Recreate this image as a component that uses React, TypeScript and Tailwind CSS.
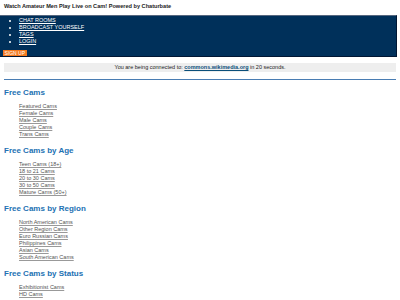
import React from 'react';

const sections = [
  { title: 'Free Cams', links: ['Featured Cams', 'Female Cams', 'Male Cams', 'Couple Cams', 'Trans Cams'] },
  { title: 'Free Cams by Age', links: ['Teen Cams (18+)', '18 to 21 Cams', '20 to 30 Cams', '30 to 50 Cams', 'Mature Cams (50+)'] },
  {
    title: 'Free Cams by Region',
    links: ['North American Cams', 'Other Region Cams', 'Euro Russian Cams', 'Philippines Cams', 'Asian Cams', 'South American Cams'],
  },
  { title: 'Free Cams by Status', links: ['Exhibitionist Cams', 'HD Cams'] },
];

const navItems = ['CHAT ROOMS', 'BROADCAST YOURSELF', 'TAGS', 'LOGIN'];

const App: React.FC = () => {
  return (
    <div className="w-[400px] h-[300px] overflow-hidden bg-white font-['Liberation_Sans',Arial,sans-serif]">
      {/* Title */}
      <h1 className="px-[4px] pt-[3px] text-[5.6px] leading-[7px] font-bold text-[#222]">
        Watch Amateur Men Play Live on Cam! Powered by Chaturbate
      </h1>

      {/* Header bar */}
      <div className="mt-[5px] w-[397px] h-[42px] bg-[#00305a] border-t border-t-[#56677f] border-b border-b-[#001633] border-r border-r-[#001633] flex flex-col">
        <ul className="list-disc pl-[19px] pt-px text-[5.5px] leading-[7px] text-white">
          {navItems.map(item => (
            <li key={item}>
              <a href="#" className="underline">{item}</a>
            </li>
          ))}
        </ul>
        <div className="mt-auto pl-[3px] flex text-[5px] leading-[6px]">
          <span className="bg-[#f47a20] text-white px-[1.5px]">SIGN UP</span>
        </div>
      </div>

      {/* Redirect notice */}
      <div className="mx-[4px] mt-[6px] h-[9px] bg-[#eeeeee] text-center text-[5.5px] leading-[9px] text-[#222]">
        You are being connected to:{' '}
        <a href="#" className="font-bold text-[#0b4f7a] underline">commons.wikimedia.org</a> in 20 seconds.
      </div>

      <div className="mx-[4px] mt-[7px] h-px bg-[#4a7db3]" />

      {/* Category lists */}
      <div className="px-[4px] pt-[7.5px]">
        {sections.map((s, i) => (
          <div key={s.title} className={i > 0 ? 'mt-[7.5px]' : ''}>
            <h2 className="text-[8px] leading-[10px] font-bold text-[#2271b3]">{s.title}</h2>
            <ul className="mt-[5.5px] pl-[15px] text-[5.5px] leading-[7px] text-[#555]">
              {s.links.map(l => (
                <li key={l}>
                  <a href="#" className="underline decoration-[#999]">{l}</a>
                </li>
              ))}
            </ul>
          </div>
        ))}
      </div>
    </div>
  );
};

export default App;
